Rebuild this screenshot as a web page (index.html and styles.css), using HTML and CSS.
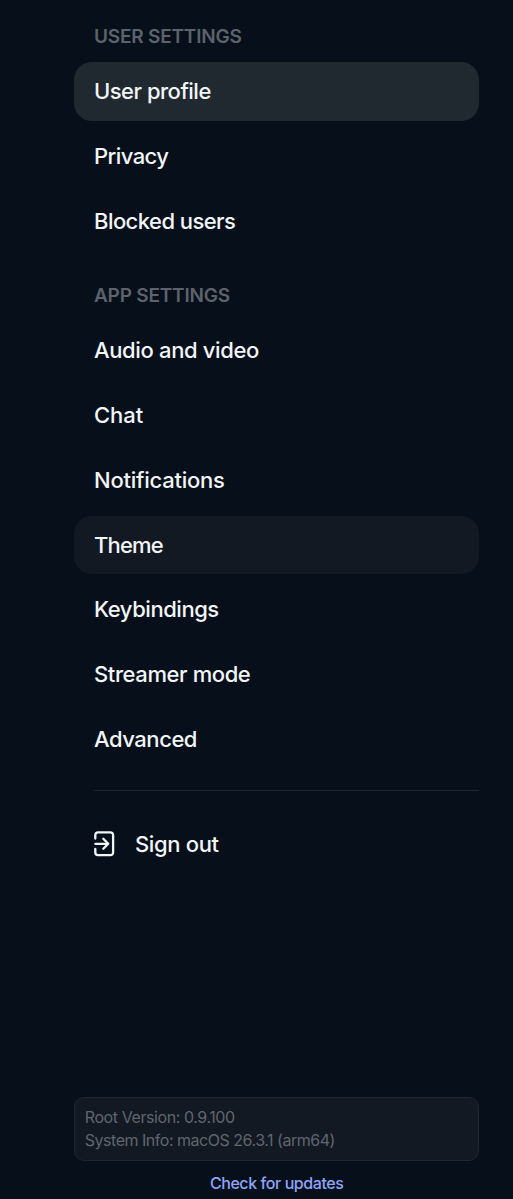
FILE: index.html
```html
<!DOCTYPE html>
<html lang="en">
  <head>
    <meta charset="utf-8">
    <title>Settings</title>
    <link rel="stylesheet" href="styles.css">
  </head>
  <body>
    <div class="sidebar">
      <nav class="menu">
        <h2 class="heading user-heading">USER SETTINGS</h2>
        <a class="item active"><span class="t-profile">User profile</span></a>
        <a class="item"><span class="t-privacy">Privacy</span></a>
        <a class="item"><span class="t-blocked">Blocked users</span></a>

        <h2 class="heading app-heading">APP SETTINGS</h2>
        <a class="item"><span class="t-audio">Audio and video</span></a>
        <a class="item"><span class="t-chat">Chat</span></a>
        <a class="item"><span class="t-notifications">Notifications</span></a>
        <a class="item hovered"><span class="t-theme">Theme</span></a>
        <a class="item"><span class="t-keys">Keybindings</span></a>
        <a class="item"><span class="t-streamer">Streamer mode</span></a>
        <a class="item"><span class="t-advanced">Advanced</span></a>

        <hr class="divider">

        <a class="item sign-out">
          <svg class="icon" width="22" height="26" viewBox="0 0 22 26" fill="none" stroke="currentColor" stroke-width="2.3" stroke-linecap="round" stroke-linejoin="round">
            <path d="M1.3 7.6V4A2.6 2.6 0 0 1 3.9 1.4h12.6A2.6 2.6 0 0 1 19.1 4v17.6a2.6 2.6 0 0 1-2.6 2.6H3.9a2.6 2.6 0 0 1-2.6-2.6V18"/>
            <path d="M1.3 12.8h12.5M9.3 7.8l5 5-5 5"/>
          </svg>
          <span class="t-signout">Sign out</span>
        </a>
      </nav>

      <footer class="footer">
        <div class="version">
          <div><span class="t-version">Root Version: 0.9.100</span></div>
          <div><span class="t-system">System Info: macOS 26.3.1 (arm64)</span></div>
        </div>
        <a class="update"><span>Check for updates</span></a>
      </footer>
    </div>
  </body>
</html>
```

FILE: styles.css
```css
body {
  margin: 0;
  background-color: #070f1a;
  font-family: Inter, "Liberation Sans", sans-serif;
  color: #f2f5f8;
}

.sidebar {
  box-sizing: border-box;
  height: 1199px;
  padding: 25px 34px 4px 74.4px;
  display: flex;
  flex-direction: column;
  justify-content: space-between;
  overflow: hidden;
}

.menu {
  display: flex;
  flex-direction: column;
}

.heading {
  margin: 0;
  padding-left: 19.6px;
  font-size: 19px;
  line-height: 24px;
  font-weight: 600;
  letter-spacing: -0.2px;
  color: #5c636b;
}

.user-heading {
  margin-bottom: 13.25px;
}

.app-heading {
  margin-top: 34px;
  margin-bottom: 13.25px;
}

.item {
  box-sizing: border-box;
  height: 58.25px;
  padding: 0 19.6px;
  display: flex;
  align-items: center;
  border-radius: 18px;
  font-size: 22px;
  font-weight: 500;
  letter-spacing: -0.45px;
  white-space: nowrap;
}

.item + .item {
  margin-top: 6.5px;
}

.active {
  background-color: #212930;
}

.hovered {
  background-color: #121923;
}

.divider {
  width: 385px;
  height: 1px;
  margin: 22px 0 24px 19.6px;
  border: none;
  background-color: #20262f;
}

.sign-out {
  gap: 19px;
}

/* per-label tracking */
.t-profile { letter-spacing: -0.5px; }
.t-privacy { letter-spacing: -0.57px; }
.t-blocked { letter-spacing: -0.55px; }
.t-audio { letter-spacing: -0.35px; }
.t-chat { letter-spacing: 0; }
.t-notifications { letter-spacing: -0.23px; }
.t-theme { letter-spacing: -0.8px; }
.t-streamer { letter-spacing: -0.4px; }
.t-signout { letter-spacing: -0.35px; }
.t-version { letter-spacing: -0.42px; }
.t-system { letter-spacing: -0.48px; }

.version {
  box-sizing: border-box;
  height: 64px;
  padding: 8px 9.4px;
  border: 1px solid #202730;
  border-radius: 10px;
  background-color: #121923;
  color: #60666e;
  font-size: 16px;
  line-height: 22.5px;
  white-space: nowrap;
}

.update {
  display: block;
  margin-top: 10px;
  text-align: center;
  font-size: 16px;
  line-height: 24px;
  font-weight: 500;
  letter-spacing: -0.42px;
  color: #8fa5fb;
}
```
